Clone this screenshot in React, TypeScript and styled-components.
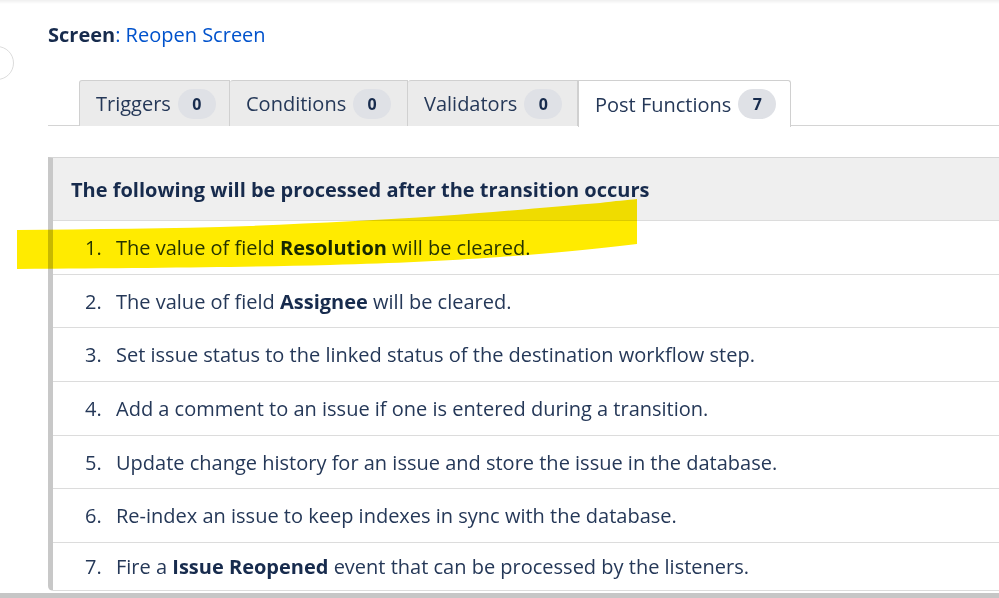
import React from "react";
import styled, { createGlobalStyle } from "styled-components";

const Global = createGlobalStyle`
  html, body { margin: 0; padding: 0; background: #fff; }
  body { font-family: "Open Sans", "Noto Sans", "Liberation Sans", sans-serif; color: #172b4d; }
`;

const Page = styled.div`
  position: relative;
  width: 999px;
  height: 598px;
  overflow: hidden;
  background: #fff;
  display: flex;
  flex-direction: column;
`;

const TopShade = styled.div`
  height: 4px;
  background: linear-gradient(#efefef, #fff);
`;

const EdgeCircle = styled.div`
  position: absolute;
  left: -20px;
  top: 46px;
  width: 32px;
  height: 32px;
  border-radius: 50%;
  border: 1px solid #dcdcdc;
  background: #fff;
`;

const Content = styled.div`
  padding-left: 48px;
  display: flex;
  flex-direction: column;
`;

const ScreenLine = styled.div`
  margin-top: 18px;
  font-size: 20px;
  line-height: 26px;
  color: #0052cc;
`;

const Label = styled.span`
  font-weight: 700;
  color: #172b4d;
`;

const TabBar = styled.div`
  margin-top: 32px;
  padding-left: 31px;
  display: flex;
  border-bottom: 1px solid #d4d4d4;
  height: 46px;
  box-sizing: border-box;
`;

const Tab = styled.div<{ $active?: boolean; $first?: boolean; $w: number }>`
  width: ${(p) => p.$w}px;
  box-sizing: border-box;
  display: flex;
  align-items: center;
  gap: 7px;
  padding-left: 16px;
  font-size: 20px;
  color: #253858;
  background: ${(p) => (p.$active ? "#fff" : "#ebebeb")};
  border: 1px solid #d0d0d0;
  border-bottom: none;
  border-left-width: ${(p) => (p.$first || p.$active ? 1 : 0)}px;
  border-radius: ${(p) => (p.$active ? "0 3px 0 0" : "3px 0 0 0")};
  margin-bottom: ${(p) => (p.$active ? "-1px" : "0")};
  height: ${(p) => (p.$active ? "47px" : "46px")};
`;

const Badge = styled.span`
  display: inline-flex;
  align-items: center;
  justify-content: center;
  min-width: 38px;
  height: 30px;
  border-radius: 15px;
  background: #dfe1e6;
  font-size: 16px;
  font-weight: 700;
  color: #172b4d;
`;

const Panel = styled.div`
  margin-top: 31px;
  border-left: 5px solid #c8c8c8;
  border-top: 1px solid #d6d6d6;
  border-bottom: 1px solid #dcdcdc;
  border-bottom-left-radius: 5px;
  display: flex;
  flex-direction: column;
`;

const PanelHeader = styled.div`
  height: 63px;
  box-sizing: border-box;
  background: #efefef;
  border-bottom: 1px solid #dcdcdc;
  display: flex;
  align-items: center;
  padding-left: 18px;
  font-size: 20px;
  font-weight: 700;
  color: #172b4d;
`;

const List = styled.ol`
  margin: 0;
  padding: 0;
  list-style: none;
`;

const Row = styled.li<{ $last?: boolean }>`
  height: ${(p) => (p.$last ? "47px" : "53.7px")};
  box-sizing: border-box;
  border-bottom: ${(p) => (p.$last ? "none" : "1px solid #dcdcdc")};
  display: flex;
  align-items: center;
  padding-left: 32px;
  font-size: 20px;
  color: #253858;

  b {
    color: #172b4d;
  }
`;

const Num = styled.span`
  width: 31px;
  flex: none;
`;

const BottomBar = styled.div`
  margin-top: auto;
  height: 5px;
  background: #c6c6c6;
`;

const Highlight = styled.svg`
  position: absolute;
  left: 0;
  top: 0;
  pointer-events: none;
  mix-blend-mode: multiply;
`;

const rows: React.ReactNode[] = [
  <>The value of field <b>Resolution</b> will be cleared.</>,
  <>The value of field <b>Assignee</b> will be cleared.</>,
  <>Set issue status to the linked status of the destination workflow step.</>,
  <>Add a comment to an issue if one is entered during a transition.</>,
  <>Update change history for an issue and store the issue in the database.</>,
  <>Re-index an issue to keep indexes in sync with the database.</>,
  <>Fire a <b>Issue Reopened</b> event that can be processed by the listeners.</>,
];

const tabs = [
  { label: "Triggers", count: 0, w: 151 },
  { label: "Conditions", count: 0, w: 178 },
  { label: "Validators", count: 0, w: 170 },
  { label: "Post Functions", count: 7, w: 213, active: true },
];

export default function App() {
  return (
    <Page>
      <Global />
      <TopShade />
      <EdgeCircle />
      <Content>
        <ScreenLine>
          <Label>Screen</Label>: Reopen Screen
        </ScreenLine>
        <TabBar>
          {tabs.map((t, i) => (
            <Tab key={t.label} $w={t.w} $active={t.active} $first={i === 0}>
              {t.label}
              <Badge>{t.count}</Badge>
            </Tab>
          ))}
        </TabBar>
        <Panel>
          <PanelHeader>The following will be processed after the transition occurs</PanelHeader>
          <List>
            {rows.map((r, i) => (
              <Row key={i} $last={i === rows.length - 1}>
                <Num>{i + 1}.</Num>
                <span>{r}</span>
              </Row>
            ))}
          </List>
        </Panel>
      </Content>
      <BottomBar />
      <Highlight width="999" height="598" viewBox="0 0 999 598">
        <path
          d="M17 230 C 90 229, 170 229, 250 226 C 320 223, 380 220, 440 216 C 500 212, 560 206, 600 203 C 615 201, 628 200, 637 199 L 637 244 C 600 248, 560 253, 500 257 C 440 261, 400 263, 330 265 C 250 267, 150 268, 17 269 Z"
          fill="#ffeb00"
        />
      </Highlight>
    </Page>
  );
}
